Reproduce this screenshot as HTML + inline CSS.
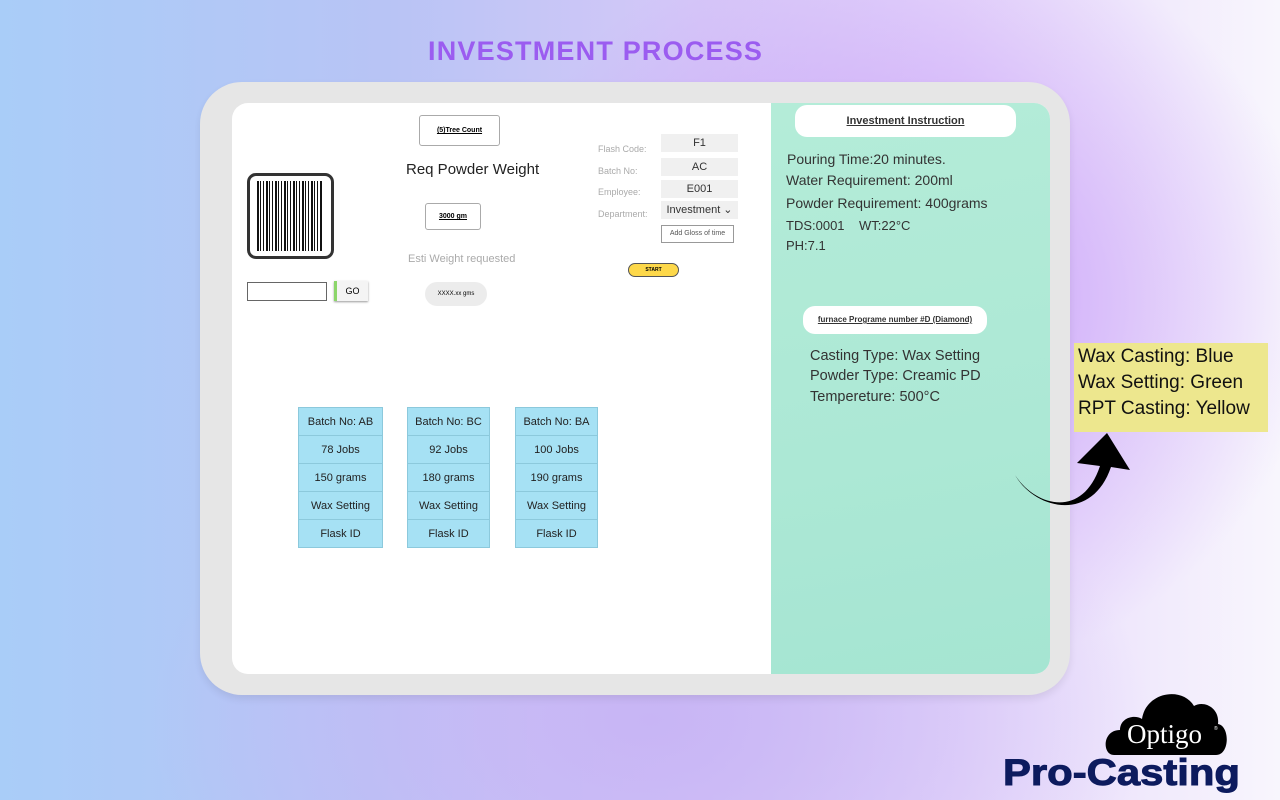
<!DOCTYPE html>
<html><head><style>
*{margin:0;padding:0;box-sizing:border-box}
body{width:1280px;height:800px;overflow:hidden;position:relative;font-family:"Liberation Sans",sans-serif;
background:radial-gradient(ellipse 420px 380px at 900px 300px,#c79cf8 0%,rgba(199,156,248,0) 100%),
radial-gradient(ellipse 500px 300px at 650px 720px,#c8b5f5 0%,rgba(200,181,245,0) 100%),
linear-gradient(90deg,#a9cdf8 0%,#b8c4f5 30%,#d6c8f8 55%,#e6d8fb 75%,#f8f6fd 100%);}
.a{position:absolute}
h1{position:absolute;left:428px;top:36px;font-size:27px;font-weight:bold;color:#9b5cf0;letter-spacing:1.2px}
.frame{left:200px;top:82px;width:870px;height:613px;border-radius:42px;background:#e6e6e6;box-shadow:0 4px 8px rgba(0,0,0,.08)}
.screen{left:232px;top:103px;width:818px;height:571px;border-radius:16px;background:#fff;overflow:hidden}
.green{left:539px;top:0;width:279px;height:571px;background:linear-gradient(170deg,#b4ecd8 0%,#ace8d5 60%,#a5e5d2 100%)}
.t{font-size:14px;color:#333}
.lbl{font-size:9px;color:#aaa}
.fld{background:#f0f0f0;font-size:11px;color:#333;text-align:center;height:18px;line-height:18px}
.cell{background:#a6e1f4;border:1px solid #8cc9dc;font-size:11px;color:#222;text-align:center;height:29px;line-height:28px;margin-top:-1px}
</style></head><body>
<h1>INVESTMENT PROCESS</h1>
<div class="a frame"></div>
<div class="a screen">
 <div class="a" style="left:187px;top:12px;width:81px;height:31px;border:1px solid #aaa;border-radius:3px;font-size:7px;font-weight:bold;text-align:center;line-height:30px;text-decoration:underline">(5)Tree Count</div>
 <div class="a" style="left:174px;top:58px;font-size:15px;color:#222">Req Powder Weight</div>
 <div class="a" style="left:193px;top:100px;width:56px;height:27px;border:1px solid #aaa;border-radius:3px;font-size:7px;font-weight:bold;text-align:center;line-height:26px;text-decoration:underline">3000 gm</div>
 <div class="a" style="left:176px;top:150px;font-size:11px;color:#aaa">Esti Weight requested</div>
 <div class="a" style="left:193px;top:179px;width:62px;height:24px;border-radius:12px;background:#ececec;font-size:6px;text-align:center;line-height:24px">XXXX.xx gms</div>
 <div class="a" style="left:15px;top:70px;width:87px;height:86px;border:3px solid #333;border-radius:9px;background:repeating-linear-gradient(90deg,#111 0 2px,#fff 2px 3px,#111 3px 4px,#fff 4px 6px,#111 6px 7px,#fff 7px 9px);background-size:66px 70px;background-repeat:no-repeat;background-position:7px 5px"></div>
 <div class="a" style="left:15px;top:179px;width:80px;height:19px;border:1px solid #666"></div>
 <div class="a" style="left:102px;top:178px;width:34px;height:20px;border-left:3px solid #8cd66a;background:#f4f4f4;box-shadow:0 1px 2px #999;font-size:9px;text-align:center;line-height:20px">GO</div>
 <div class="a lbl" style="left:366px;top:41px">Flash Code:</div>
 <div class="a lbl" style="left:366px;top:63px">Batch No:</div>
 <div class="a lbl" style="left:366px;top:84px">Employee:</div>
 <div class="a lbl" style="left:366px;top:106px">Department:</div>
 <div class="a fld" style="left:429px;top:31px;width:77px">F1</div>
 <div class="a fld" style="left:429px;top:55px;width:77px">AC</div>
 <div class="a fld" style="left:429px;top:77px;width:77px">E001</div>
 <div class="a fld" style="left:429px;top:98px;width:77px">Investment ⌄</div>
 <div class="a" style="left:429px;top:122px;width:73px;height:18px;border:1px solid #999;font-size:7px;color:#555;text-align:center;line-height:16px">Add Gloss of time</div>
 <div class="a" style="left:396px;top:160px;width:51px;height:14px;border:1px solid #555;border-radius:7px;background:#fdd84a;font-size:5px;font-weight:bold;text-align:center;line-height:12px">START</div>
 <div class="a" style="left:66px;top:305px;width:85px"><div class="cell">Batch No: AB</div><div class="cell">78 Jobs</div><div class="cell">150 grams</div><div class="cell">Wax Setting</div><div class="cell">Flask ID</div></div>
 <div class="a" style="left:175px;top:305px;width:83px"><div class="cell">Batch No: BC</div><div class="cell">92 Jobs</div><div class="cell">180 grams</div><div class="cell">Wax Setting</div><div class="cell">Flask ID</div></div>
 <div class="a" style="left:283px;top:305px;width:83px"><div class="cell">Batch No: BA</div><div class="cell">100 Jobs</div><div class="cell">190 grams</div><div class="cell">Wax Setting</div><div class="cell">Flask ID</div></div>
 <div class="a green">
  <div class="a" style="left:24px;top:2px;width:221px;height:32px;background:#fff;border-radius:12px;font-size:11px;font-weight:bold;text-align:center;line-height:32px;color:#333;text-decoration:underline">Investment Instruction</div>
  <div class="a t" style="left:16px;top:48px">Pouring Time:20 minutes.</div>
  <div class="a t" style="left:15px;top:69px">Water Requirement: 200ml</div>
  <div class="a t" style="left:15px;top:92px">Powder Requirement: 400grams</div>
  <div class="a t" style="left:15px;top:115px;font-size:13px">TDS:0001&nbsp;&nbsp;&nbsp;&nbsp;WT:22°C</div>
  <div class="a t" style="left:15px;top:135px;font-size:13px">PH:7.1</div>
  <div class="a" style="left:32px;top:203px;width:184px;height:28px;background:#fff;border-radius:12px;font-size:8px;font-weight:bold;text-align:center;line-height:28px;color:#333;text-decoration:underline">furnace Programe number #D (Diamond)</div>
  <div class="a t" style="left:39px;top:245px;font-size:14.5px">Casting Type: Wax Setting</div>
  <div class="a t" style="left:39px;top:265px;font-size:14.5px">Powder Type: Creamic PD</div>
  <div class="a t" style="left:39px;top:286px;font-size:14.5px">Tempereture: 500°C</div>
 </div>
</div>
<div class="a" style="left:1074px;top:343px;width:194px;height:89px;background:#ede78e;font-size:19px;color:#111;padding:1px 0 0 4px;line-height:26px">Wax Casting: Blue<br>Wax Setting: Green<br>RPT Casting: Yellow</div>
<svg class="a" style="left:1010px;top:428px" width="130" height="85" viewBox="0 0 130 85"><path d="M5 47 C25 78 72 92 90 38 L67 35 L97 5 L120 42 L101 39 C82 95 25 82 5 47Z" fill="#000"/></svg>
<svg class="a" style="left:1100px;top:688px" width="130" height="70" viewBox="0 0 130 70"><path d="M14 67 C2 67 2 42 20 42 C20 30 34 26 42 31 C46 4 82 -2 94 18 C104 12 120 20 118 36 C130 38 130 67 116 67Z" fill="#000"/><text x="27" y="55" font-family="Liberation Serif,serif" font-size="27" fill="#fff">Optigo</text><text x="114" y="42" font-size="5" fill="#fff">®</text></svg>
<div class="a" style="left:1003px;top:752px;font-size:37px;font-weight:900;color:#0d1b5e;transform:scaleX(1.13);transform-origin:left;-webkit-text-stroke:1px #0d1b5e">Pro-Casting</div>
</body></html>
